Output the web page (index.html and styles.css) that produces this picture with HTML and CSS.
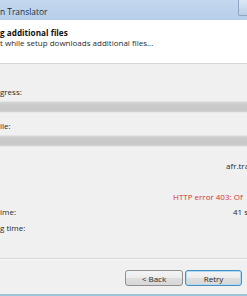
FILE: index.html
```html
<!DOCTYPE html>
<html>
<head>
<meta charset="utf-8">
<link rel="stylesheet" href="styles.css">
</head>
<body>
<div class="window">
  <div class="titlebar">
    <span class="title">n Translator</span>
    <span class="ctrl"></span>
  </div>
  <div class="header">
    <div class="h-title">g additional files</div>
    <div class="h-sub">t while setup downloads additional files...</div>
  </div>
  <div class="content">
    <div class="label l-overall">gress:</div>
    <div class="bar"></div>
    <div class="label l-file">ile:</div>
    <div class="bar"></div>
    <div class="value v-file">afr.tra</div>
    <div class="value v-err">HTTP error 403: Of</div>
    <div class="row r-elapsed">
      <span class="label lbl-fixed">ime:</span>
      <span class="value v-time">41 s</span>
    </div>
    <div class="label l-remain">g time:</div>
  </div>
  <div class="footer">
    <button class="btn">&lt; Back</button>
    <button class="btn btn-default">Retry</button>
  </div>
  <div class="frame-bottom"></div>
</div>
</body>
</html>
```

FILE: styles.css
```css
* { box-sizing: border-box; }
html, body { margin: 0; padding: 0; }
body {
  width: 247px;
  height: 296px;
  overflow: hidden;
  background: #f0f0f0;
  font-family: "Open Sans", "Noto Sans", sans-serif;
  font-size: 8px;
  color: #2a2a2a;
}
.window {
  display: flex;
  flex-direction: column;
  height: 296px;
  width: 247px;
  overflow: hidden;
}
.titlebar {
  height: 20px;
  flex: none;
  display: flex;
  align-items: flex-start;
  justify-content: space-between;
  background: linear-gradient(#c4d8ee, #b6cee9);
}
.title {
  line-height: 12px;
  padding-top: 6px;
  font-size: 8.4px;
  color: #1e2d40;
  white-space: nowrap;
}
.ctrl {
  width: 9px;
  height: 16px;
  border: 1px solid #90a8c6;
  border-right: none;
  border-top: none;
  border-radius: 0 0 0 2px;
  background: linear-gradient(#dbe7f4, #bcd0e8);
}
.header {
  height: 44px;
  flex: none;
  background: #fff;
  border-bottom: 1px solid #d6d6d6;
  padding-top: 7px;
  white-space: nowrap;
}
.h-title {
  font-weight: bold;
  font-size: 8.2px;
  line-height: 12px;
  color: #111;
}
.h-sub {
  line-height: 12px;
  margin-top: -2px;
}
.content {
  flex: 1;
  white-space: nowrap;
  border-bottom: 1px solid #d8d8d8;
  box-shadow: 0 1px 0 #fafafa;
}
.label, .value { line-height: 12px; }
.l-overall { margin-top: 22px; }
.bar {
  height: 12px;
  margin-top: 3px;
  border-top: 1px solid #e4e4e4;
  border-bottom: 1px solid #e8e8e8;
  background: linear-gradient(#d6d6d6 0, #cbcbcb 25%, #c8c8c8 80%, #d4d4d4 100%);
  margin-right: -4px;
}
.l-file { margin-top: 7px; }
.v-file { margin-top: 13px; padding-left: 226px; }
.v-err { margin-top: 19px; padding-left: 173px; color: #d03434; }
.r-elapsed { display: flex; margin-top: 3px; }
.lbl-fixed { width: 20px; flex: none; }
.v-time { padding-left: 213px; }
.l-remain { margin-top: 4px; }
.footer {
  height: 35px;
  flex: none;
  display: flex;
  gap: 2px;
  padding-left: 125px;
  padding-top: 11px;
}
.btn {
  width: 58px;
  height: 16px;
  padding: 0;
  font-family: inherit;
  font-size: 8px;
  color: #2a2a2a;
  border: 1px solid #909090;
  border-radius: 3px;
  background: linear-gradient(#f4f4f4 0, #ececec 50%, #dfdfdf 51%, #d7d7d7 100%);
}
.btn-default {
  width: 57px;
  border-color: #4a8ebf;
  box-shadow: inset 0 0 0 1px #b0daf2;
}
.frame-bottom {
  height: 2px;
  flex: none;
  background: #9fc3d6;
}
```
